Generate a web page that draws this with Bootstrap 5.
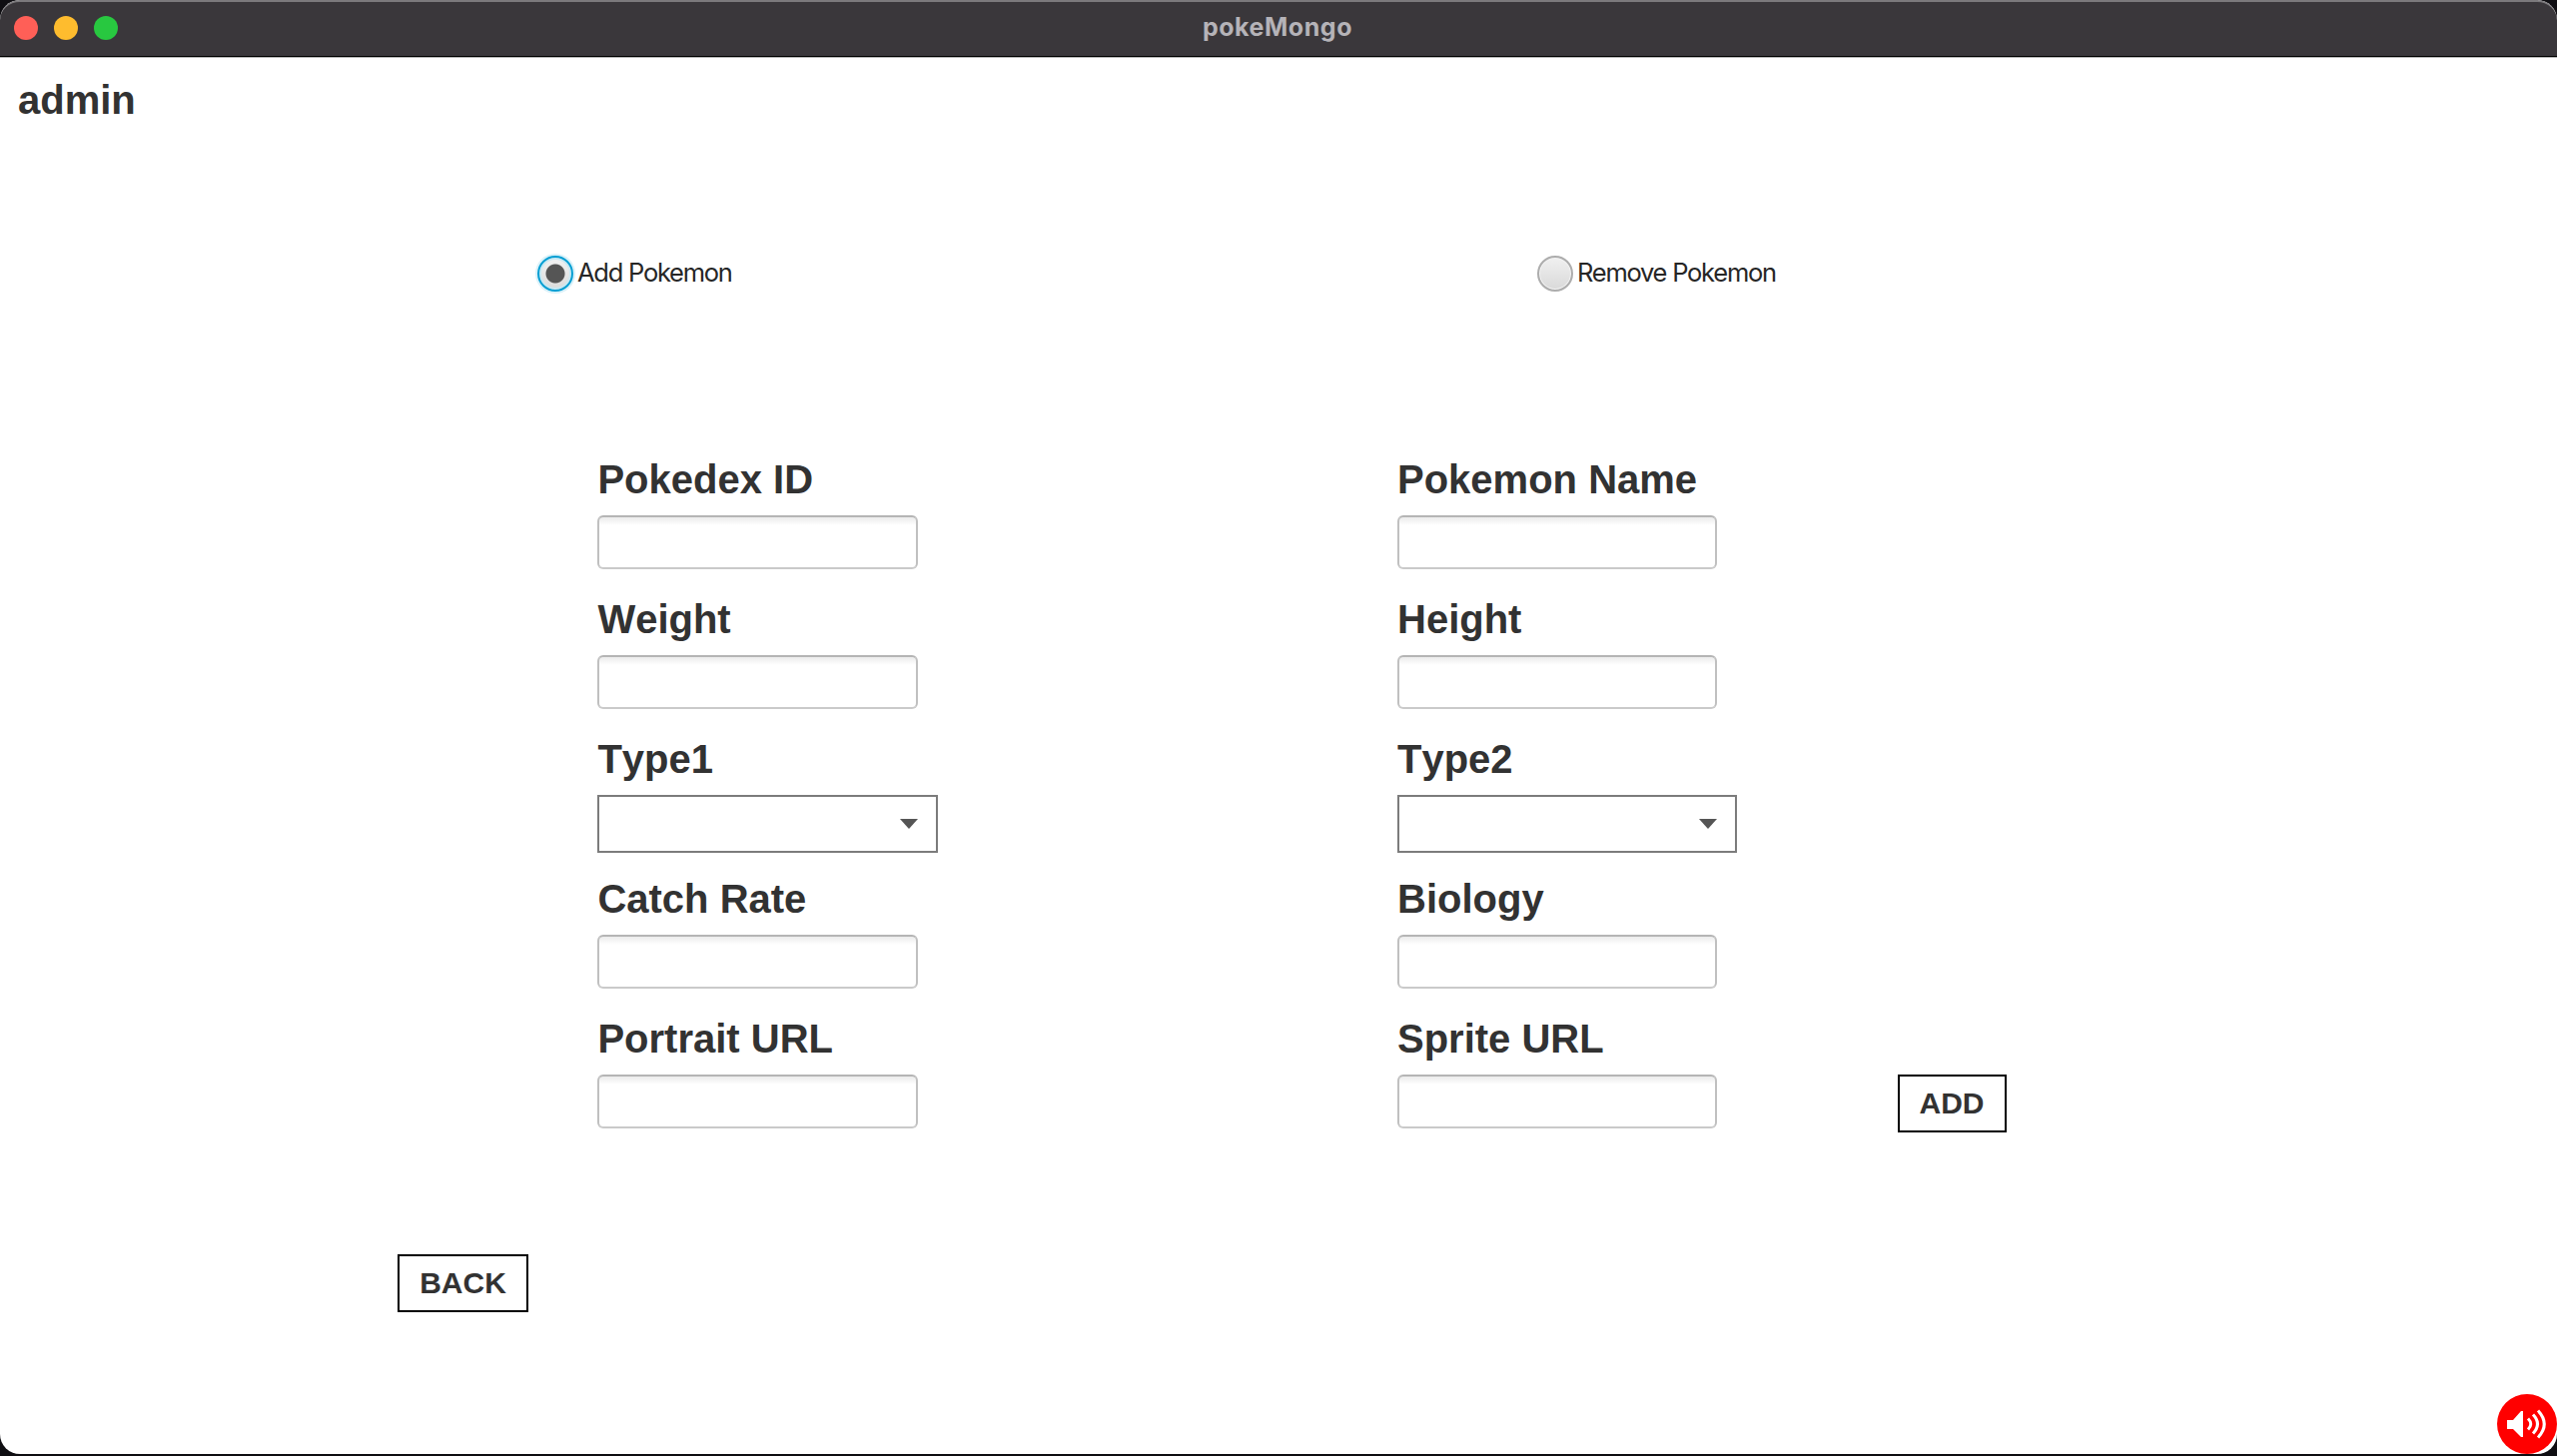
<!DOCTYPE html>
<html lang="en">
<head>
<meta charset="utf-8">
<meta name="viewport" content="width=device-width, initial-scale=1">
<title>pokeMongo</title>
<link href="https://cdn.jsdelivr.net/npm/bootstrap@5.3.0/dist/css/bootstrap.min.css" rel="stylesheet">
<style>
html, body { height: 100%; }
body { background: #0f0e12; color: #323232; font-family: "Liberation Sans", Arial, sans-serif; font-kerning: none; overflow: hidden; }
.app-window { height: 1456px; border-radius: 20px; background: #fff; }
.title-bar { height: 58px; background: #3a373b; border-top: 2px solid #7b797c; border-bottom: 1px solid #b5b5b5; box-shadow: inset 0 -1px 0 #000; border-radius: 20px 20px 0 0; padding-left: 14px; }
.lights { gap: 16px; height: 52px; }
.light { width: 24px; height: 24px; border-radius: 50%; }
.light-close { background: #ff5f57; }
.light-min { background: #febc2e; }
.light-max { background: #28c840; }
.window-name { left: 0; right: 2px; top: 0; height: 50px; font: 700 25px/50px Inter, sans-serif; color: #b5b3b8; letter-spacing: .55px; }
.heading-text, .field-label { font-size: 40px; font-weight: 700; line-height: 46px; }
.heading-text { padding: 19px 0 0 18px; height: 180px; }
.choices { padding-left: 538px; height: 72px; }
.choice { width: 1001px; height: 72px; gap: 5px; font: 400 25.500px/36px Inter, sans-serif; letter-spacing: -1.250px; color: #262626; }
.choice-name { margin-top: -2px; margin-left: -1px; }
.dot { width: 36px; height: 36px; flex: none; border: 2px solid #adadad; border-radius: 50%; background: linear-gradient(#f0f0f0, #d9d9d9); box-shadow: inset 0 0 0 1px #f3f3f3; }
.dot-on { border-color: #039ed3; box-shadow: 0 0 0 2px #d9f1f9, inset 0 0 0 2px #c8e8f3; background: radial-gradient(circle, #555 0 9px, transparent 10px), linear-gradient(#f2f2f2, #dadada); }
.fields { padding: 147px 0 0 598px; }
.field-col { width: 801px; }
.field-row { height: 140px; }
.field-label { margin-bottom: 13px; display: block; }
.field-col:first-child .field-label { padding-left: .4px; }
.field-box.form-control { width: 320px; height: 54px; padding: 0 14px; border: 2px solid; border-color: #b5b5b5 #c0c0c0 #cacaca; border-radius: 6px; background: linear-gradient(#ebebeb, #fff 8px); }
.pick-box { width: 340px; height: 58px; border: 2px solid #7c7c7c; background: #fff; padding: 0 18px 0 0; }
.field-col:first-child .field-box { width: 321px; }
.field-col:first-child .pick-box { width: 341px; }
.push-btn.btn { height: 58px; border: 2px solid #000; border-radius: 0; background: #fff; color: #323232; font-size: 30px; font-weight: 700; line-height: 54px; padding: 0; }
.add-btn { width: 109px; margin-bottom: 23px; margin-left: -300.500px; }
.back-row { padding: 99px 0 0 398px; }
.back-btn { width: 131px; }
.sound { right: 0; top: 1396px; width: 60px; height: 60px; }
</style>
</head>
<body>
<div class="app-window">
  <header class="title-bar position-relative">
    <div class="lights d-flex align-items-center">
      <span class="light light-close"></span><span class="light light-min"></span><span class="light light-max"></span>
    </div>
    <div class="window-name position-absolute text-center">pokeMongo</div>
  </header>
  <main>
    <div class="heading-text">admin</div>
    <div class="choices d-flex">
      <label class="choice d-flex align-items-center"><span class="dot dot-on"></span><span class="choice-name">Add Pokemon</span></label>
      <label class="choice d-flex align-items-center"><span class="dot"></span><span class="choice-name">Remove Pokemon</span></label>
    </div>
    <form class="fields d-flex">
      <div class="field-col">
        <div class="field-row"><label class="field-label">Pokedex ID</label><input class="form-control field-box"></div>
        <div class="field-row"><label class="field-label">Weight</label><input class="form-control field-box"></div>
        <div class="field-row"><label class="field-label">Type1</label><div class="pick-box d-flex align-items-center justify-content-end"><svg width="18" height="10" viewBox="0 0 18 10"><path d="M0 0H18L9 10Z" fill="#555"/></svg></div></div>
        <div class="field-row"><label class="field-label">Catch Rate</label><input class="form-control field-box"></div>
        <div class="field-row"><label class="field-label">Portrait URL</label><input class="form-control field-box"></div>
      </div>
      <div class="field-col">
        <div class="field-row"><label class="field-label">Pokemon Name</label><input class="form-control field-box"></div>
        <div class="field-row"><label class="field-label">Height</label><input class="form-control field-box"></div>
        <div class="field-row"><label class="field-label">Type2</label><div class="pick-box d-flex align-items-center justify-content-end"><svg width="18" height="10" viewBox="0 0 18 10"><path d="M0 0H18L9 10Z" fill="#555"/></svg></div></div>
        <div class="field-row"><label class="field-label">Biology</label><input class="form-control field-box"></div>
        <div class="field-row"><label class="field-label">Sprite URL</label><input class="form-control field-box"></div>
      </div>
      <div class="d-flex align-items-end"><button type="button" class="btn push-btn add-btn">ADD</button></div>
    </form>
    <div class="back-row"><button type="button" class="btn push-btn back-btn">BACK</button></div>
  </main>
</div>
<svg class="sound position-absolute" viewBox="0 0 60 60">
  <circle cx="30" cy="30" r="30" fill="#f00"/>
  <path d="M10 26H16L24 17H26V43H24L16 35H10Z" fill="#fff"/>
  <g fill="none" stroke="#fff" stroke-width="3"><path d="M31 24.500Q36.500 30 31 35.500"/><path d="M36 20.500Q45 30 36 39.500"/><path d="M41 16.500Q53.500 30 41 43.500"/></g>
</svg>
<script src="https://cdn.jsdelivr.net/npm/bootstrap@5.3.0/dist/js/bootstrap.bundle.min.js"></script>
</body>
</html>
